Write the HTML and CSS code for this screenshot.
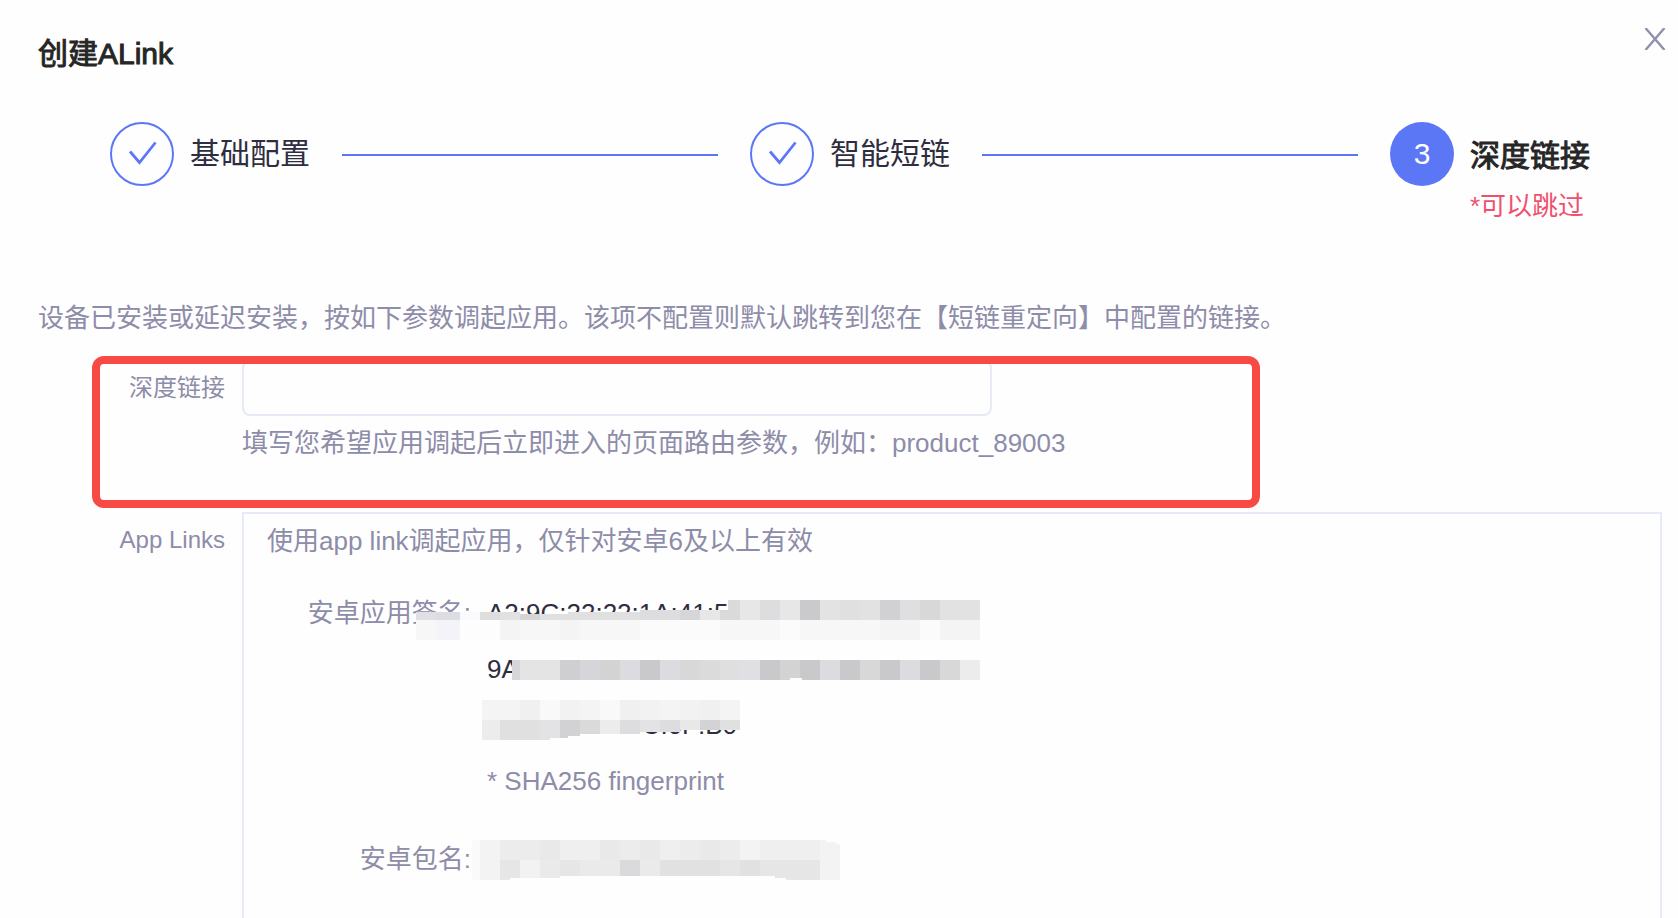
FILE: index.html
```html
<!DOCTYPE html>
<html lang="zh-CN">
<head>
<meta charset="utf-8">
<title>创建ALink</title>
<link rel="stylesheet" href="styles.css">
</head>
<body>
<div class="dialog">
  <header class="dialog-header">
    <h1 class="dialog-title">创建ALink</h1>
    <button class="close" type="button" aria-label="关闭">
      <svg width="22" height="22" viewBox="0 0 22 22" fill="none" stroke="currentColor" stroke-width="2.400"><path d="M1.500 0 20.500 22M20.500 0 1.500 22"/></svg>
    </button>
  </header>

  <ol class="steps">
    <li class="step">
      <span class="step-icon"><svg width="64" height="64" viewBox="0 0 64 64" fill="none" stroke="currentColor"><circle cx="32" cy="32" r="31" stroke-width="2"/><path d="M20 29.500 29.500 40.500 45.500 20.500" stroke-width="2.800"/></svg></span>
      <span class="step-name">基础配置</span>
    </li>
    <li class="step-line" aria-hidden="true"></li>
    <li class="step">
      <span class="step-icon"><svg width="64" height="64" viewBox="0 0 64 64" fill="none" stroke="currentColor"><circle cx="32" cy="32" r="31" stroke-width="2"/><path d="M20 29.500 29.500 40.500 45.500 20.500" stroke-width="2.800"/></svg></span>
      <span class="step-name">智能短链</span>
    </li>
    <li class="step-line" aria-hidden="true"></li>
    <li class="step step-current">
      <span class="step-icon step-number">3</span>
      <span class="step-text">
        <span class="step-name">深度链接</span>
        <span class="step-note">*可以跳过</span>
      </span>
    </li>
  </ol>

  <main class="content">
    <p class="intro">设备已安装或延迟安装，按如下参数调起应用。该项不配置则默认跳转到您在【短链重定向】中配置的链接。</p>
    <form class="form">
      <div class="field field-marked">
        <label class="field-label" for="deep-link">深度链接</label>
        <div class="field-body">
          <input class="text-input" id="deep-link" type="text">
          <p class="hint">填写您希望应用调起后立即进入的页面路由参数，例如：product_89003</p>
        </div>
        <div class="marker"></div>
      </div>
      <div class="field">
        <span class="field-label">App Links</span>
        <section class="panel">
          <p class="panel-intro">使用app link调起应用，仅针对安卓6及以上有效</p>
          <dl class="details">
            <dt>安卓应用签名:</dt>
            <dd>
              <span class="line">A2:9C:22:22:1A:41:5</span>
              <span class="line">9A</span>
              <span class="line line-tail">C:0F:B0</span>
              <span class="line line-note">* SHA256 fingerprint</span>
            </dd>
            <dt>安卓包名:</dt>
            <dd></dd>
          </dl>
          <svg class="mosaic" width="756" height="404" viewBox="244 514 756 404" shape-rendering="crispEdges" aria-hidden="true">
            <path fill="#fefefe" d="M416 640H984V660H416zM512 680H740V700H512z"/>
            <path fill="#dfdfe4" d="M416 612h20v8h-20z"/><path fill="#dcdce3" d="M436 612h24v8h-24z"/>
            <path fill="#fafafc" d="M460 612h20v8h-20z"/><path fill="#dedede" d="M480 612h20v8h-20z"/>
            <path fill="#e1e1e1" d="M500 612h20v8h-20z"/><path fill="#d5d5d6" d="M520 614h20v6h-20z"/>
            <path fill="#e0e0e0" d="M540 614h28v6h-28zM568 612h72v8h-72z"/>
            <path fill="#dddde0" d="M640 610h40v10h-40z"/><path fill="#d6d6d8" d="M680 610h20v10h-20z"/><path fill="#e7e7e7" d="M700 610h20v10h-20z"/>
            <path fill="#dadada" d="M720 610h8v-10h12v20h-20z"/><path fill="#e7e7e7" d="M740 600h20v20h-20z"/><path fill="#dddde0" d="M760 600h20v20h-20z"/><path fill="#e7e7e7" d="M780 600h20v20h-20z"/><path fill="#cacacd" d="M800 600h20v20h-20z"/><path fill="#e3e3e3" d="M820 600h20v20h-20z"/><path fill="#e0e0e0" d="M840 600h20v20h-20z"/><path fill="#e2e2e2" d="M860 600h20v20h-20z"/><path fill="#d1d1d3" d="M880 600h20v20h-20z"/><path fill="#dfdfe1" d="M900 600h20v20h-20z"/><path fill="#d8d8d8" d="M920 600h20v20h-20z"/><path fill="#e2e2e2" d="M940 600h40v20h-40z"/>
            <path fill="#f7f7f8" d="M416 620h20v20h-20z"/><path fill="#f4f4f8" d="M436 620h24v20h-24z"/><path fill="#fdfdfe" d="M460 620h40v20h-40z"/><path fill="#f4f4f4" d="M500 620h20v20h-20zM560 620h20v20h-20zM880 620h40v20h-40zM940 620h40v20h-40z"/><path fill="#f7f7f7" d="M520 620h40v20h-40zM580 620h60v20h-60zM720 620h60v20h-60zM800 620h80v20h-80z"/><path fill="#fbfbfb" d="M640 620h80v20h-80zM780 620h20v20h-20zM920 620h20v20h-20z"/>
            <path fill="#d6d6da" d="M512 660h8v20h-8zM580 660h20v20h-20z"/><path fill="#e4e4e4" d="M520 660h40v20h-40z"/><path fill="#cfcfd1" d="M560 660h20v20h-20z"/><path fill="#d3d3d3" d="M600 660h20v20h-20zM780 660h20v20h-20z"/><path fill="#dcdce0" d="M620 660h20v20h-20zM660 660h20v20h-20zM820 660h20v20h-20zM900 660h20v20h-20z"/><path fill="#c9c9cb" d="M640 660h20v20h-20zM760 660h20v20h-20zM800 660h20v20h-20zM840 660h20v20h-20zM880 660h20v20h-20zM920 660h20v20h-20z"/><path fill="#d8d8d8" d="M680 660h20v20h-20zM860 660h20v20h-20zM940 660h20v20h-20z"/><path fill="#dbdbdb" d="M700 660h20v20h-20z"/><path fill="#dfdfdf" d="M720 660h20v20h-20z"/><path fill="#e0e0e4" d="M740 660h20v20h-20z"/><path fill="#ececec" d="M960 660h20v20h-20z"/><path fill="#fefefe" d="M790 678h12v2h-12z"/>
            <path fill="#f4f4f4" d="M482 700h38v20h-38zM580 700h20v20h-20zM660 700h20v20h-20zM720 700h20v20h-20z"/><path fill="#f0f0f0" d="M520 700h20v20h-20zM620 700h20v20h-20zM700 700h20v20h-20z"/><path fill="#f9f9f9" d="M540 700h20v20h-20zM600 700h20v20h-20z"/><path fill="#f2f2f2" d="M560 700h20v20h-20zM640 700h20v20h-20zM680 700h20v20h-20z"/>
            <path fill="#ececec" d="M482 720h18v20h-18zM600 720h20v14h-20z"/><path fill="#e0e0e0" d="M500 720h40v20h-40zM720 720h20v10h-20z"/><path fill="#e3e3e6" d="M540 720h20v18h-10v2h-10zM640 720h20v12h-20z"/><path fill="#d2d2d5" d="M560 720h20v16h-12v2h-8z"/><path fill="#dadada" d="M580 720h20v14h-20z"/><path fill="#dddde0" d="M620 720h20v14h-20zM660 720h20v12h-20z"/><path fill="#e8e8e8" d="M680 720h20v10h-20z"/><path fill="#d3d3d5" d="M700 720h20v10h-20z"/>
            <path fill="#fafafa" d="M472 840h8v40h-8z"/><path fill="#f3f3f3" d="M480 840h20v40h-20zM740 840h20v20h-20zM820 840h6v2h10v2h4v36h-20z"/><path fill="#ececec" d="M500 840h40v20h-40zM620 840h20v20h-20zM680 840h20v20h-20zM720 840h20v20h-20z"/><path fill="#e9e9e9" d="M540 840h20v20h-20zM600 840h20v20h-20zM640 840h20v20h-20zM700 840h20v20h-20z"/><path fill="#efefef" d="M560 840h40v20h-40zM660 840h20v20h-20zM760 840h60v20h-60z"/>
            <path fill="#e6e6e6" d="M500 860h20v18h-10v2h-10zM560 860h20v16h-20zM720 860h20v16h-20zM760 860h60v20h-34v-2h-11v-2h-15z"/><path fill="#f2f2f2" d="M520 860h20v18h-20z"/><path fill="#eaeaea" d="M540 860h20v18h-20zM580 860h40v16h-40zM640 860h20v16h-20z"/><path fill="#dadadd" d="M620 860h20v16h-20z"/><path fill="#e1e1e1" d="M660 860h60v16h-60zM740 860h20v16h-20z"/>
          </svg>
        </section>
      </div>
    </form>
  </main>
</div>
</body>
</html>
```
FILE: styles.css
```css
* {
  box-sizing: border-box;
}

body {
  margin: 0;
  background: #fefefe;
  color: #8d8ca9;
  font-family: "Liberation Sans", "Noto Sans CJK SC", sans-serif;
  font-size: 26px;
  line-height: 40px;
}

h1,
p,
ol,
dl,
dd {
  margin: 0;
  padding: 0;
}

.dialog {
  display: flex;
  flex-direction: column;
  min-height: 100vh;
}

.dialog-header {
  display: flex;
  justify-content: space-between;
  align-items: flex-start;
  padding: 28px 12px 0 38px;
}

.dialog-title {
  padding-top: 4px;
  color: #262626;
  font-size: 30px;
  font-weight: 400;
  line-height: 44px;
  -webkit-text-stroke: 1px currentColor;
}

.close {
  display: flex;
  padding: 0;
  border: 0;
  background: none;
  color: #9090ad;
}

.steps {
  display: flex;
  align-items: flex-start;
  gap: 32px;
  padding: 46px 88px 0 110px;
  list-style: none;
}

.step {
  display: flex;
  gap: 16px;
  color: #2f2d40;
  font-size: 30px;
  line-height: 64px;
}

.step-icon {
  width: 64px;
  height: 64px;
  color: #5c77f5;
}

.step-icon svg {
  display: block;
}

.step-number {
  border-radius: 50%;
  background: #5c77f5;
  color: #fefefe;
  text-align: center;
}

.step-line {
  flex: 1;
  height: 2px;
  margin-top: 32px;
  background: #5c77f5;
}

.step-text {
  display: flex;
  flex-direction: column;
  width: 120px;
  padding-top: 2px;
}

.step-current .step-name {
  color: #262626;
  -webkit-text-stroke: 1px currentColor;
}

.step-note {
  color: #f0506e;
  font-size: 26px;
  line-height: 36px;
}

.content {
  flex: 1;
  display: flex;
  flex-direction: column;
  padding: 74px 16px 0 38px;
}

.form {
  flex: 1;
  display: flex;
  flex-direction: column;
  padding-top: 22px;
}

.field {
  flex: 1;
  display: grid;
  grid-template-columns: 187px 1fr;
  gap: 17px;
}

.field-label {
  padding-top: 8px;
  font-size: 24px;
  text-align: right;
}

.field-marked {
  flex: none;
  position: relative;
  min-height: 152px;
}

.text-input {
  display: block;
  width: 100%;
  max-width: 750px;
  height: 56px;
  padding: 0 16px;
  border: 2px solid #e6e9f6;
  border-radius: 8px;
  background: #fefefe;
  color: #2f2d40;
  font: inherit;
}

.hint {
  padding-top: 7px;
}

.marker {
  position: absolute;
  top: -4px;
  left: 54px;
  width: 1168px;
  height: 152px;
  border: 8px solid #f84a45;
  border-radius: 12px;
  pointer-events: none;
}

.panel {
  position: relative;
  padding: 7px 23px 0;
  border: 2px solid #e6e9f6;
  border-bottom: 0;
}

.details {
  display: grid;
  grid-template-columns: 204px 1fr;
  column-gap: 16px;
  row-gap: 22px;
  padding-top: 24px;
  line-height: 56px;
}

.details dt {
  text-align: right;
}

.details dd {
  color: #2f2d40;
}

.line {
  display: block;
}

.line-tail {
  width: 250px;
  text-align: right;
}

.details .line-note {
  color: #8d8ca9;
}

.mosaic {
  position: absolute;
  top: 0;
  left: 0;
}
```
